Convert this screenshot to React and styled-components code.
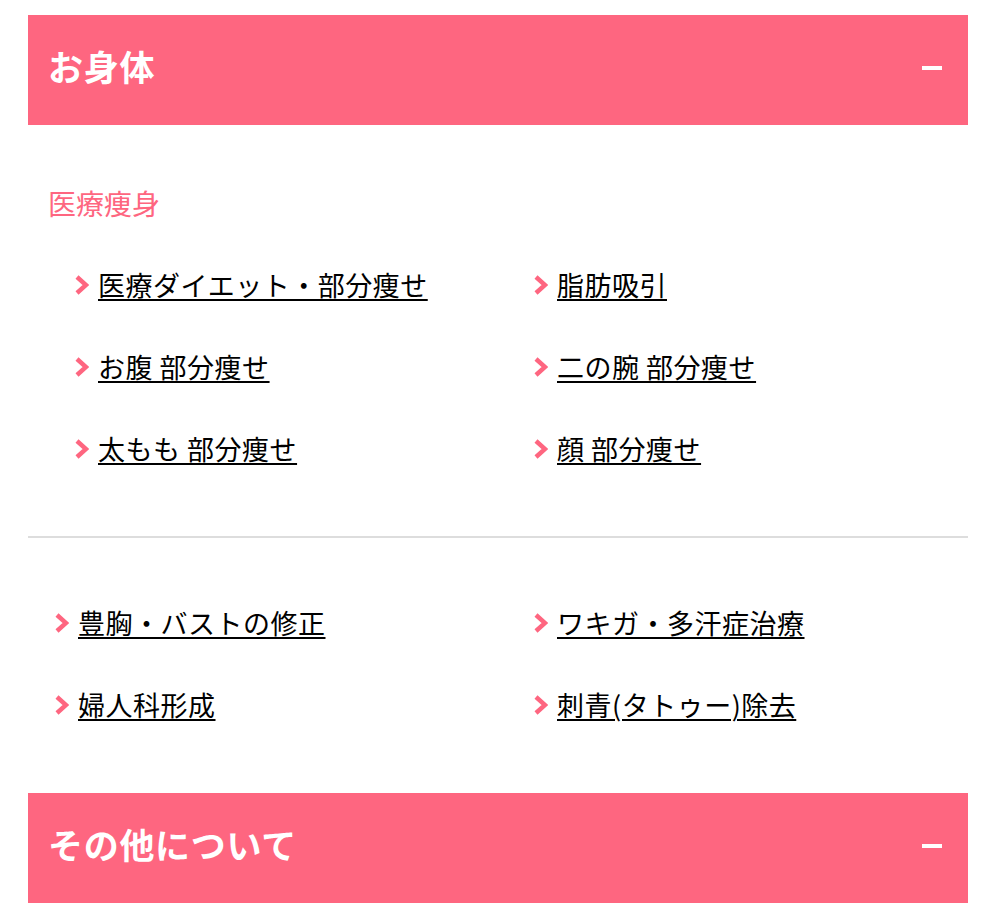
import React, { useState } from 'react';
import styled, { createGlobalStyle } from 'styled-components';

const GlobalStyle = createGlobalStyle`
  * {
    box-sizing: border-box;
  }

  body {
    margin: 0;
    background: #fff;
    font-family: 'Noto Sans CJK JP', 'Noto Sans', sans-serif;
    color: #000;
  }
`;

const PINK = '#fe6680';

const Page = styled.div`
  padding: 15px 28px;
`;

const AccordionHeader = styled.button`
  display: flex;
  align-items: center;
  justify-content: space-between;
  width: 100%;
  height: 110px;
  padding: 0 26px 4px 20px;
  border: none;
  background: ${PINK};
  color: #fff;
  font-family: inherit;
  cursor: pointer;
  text-align: left;
`;

const HeaderTitle = styled.span`
  margin-bottom: 5px;
  font-size: 35px;
  line-height: 50px;
  font-weight: 700;
  letter-spacing: 0.02em;
`;

const Minus = styled.span`
  display: block;
  width: 20px;
  height: 4px;
  background: #fff;
`;

const Group = styled.div`
  padding: ${props => props.$top}px 0 ${props => props.$bottom}px;
  border-bottom: ${props => (props.$divider ? '2px solid #dddddd' : 'none')};
`;

const GroupTitle = styled.h3`
  margin: 0 0 42px;
  padding-left: 20px;
  font-size: 28px;
  line-height: 40px;
  font-weight: 400;
  color: ${PINK};
`;

const LinkGrid = styled.ul`
  display: grid;
  grid-template-columns: ${props => 505 - props.$indent}px 1fr;
  row-gap: 42px;
  margin: 0;
  padding: 0 0 0 ${props => props.$indent}px;
  list-style: none;
`;

const LinkItem = styled.li`
  display: flex;
  align-items: center;
  gap: 9px;
  height: 40px;

  svg {
    flex-shrink: 0;
  }
`;

const LinkText = styled.a`
  font-size: 27px;
  line-height: 40px;
  letter-spacing: 0.5px;
  color: #000;
  text-decoration: underline;
  text-decoration-thickness: 2px;
  text-underline-offset: 3px;
  white-space: nowrap;
  cursor: pointer;
`;

const Chevron = () => (
  <svg width="15" height="22" viewBox="0 0 15 22">
    <polyline
      points="3,3 12,11 3,19"
      fill="none"
      stroke={PINK}
      strokeWidth="4.5"
    />
  </svg>
);

const slimming = [
  '医療ダイエット・部分痩せ',
  '脂肪吸引',
  'お腹 部分痩せ',
  '二の腕 部分痩せ',
  '太もも 部分痩せ',
  '顔 部分痩せ'
];

const others = ['豊胸・バストの修正', 'ワキガ・多汗症治療', '婦人科形成', '刺青(タトゥー)除去'];

const Links = ({ items, indent }) => (
  <LinkGrid $indent={indent}>
    {items.map(item => (
      <LinkItem key={item}>
        <Chevron />
        <LinkText>{item}</LinkText>
      </LinkItem>
    ))}
  </LinkGrid>
);

const App = () => {
  const [open, setOpen] = useState(true);

  return (
    <>
      <GlobalStyle />
      <Page>
        <AccordionHeader onClick={() => setOpen(!open)}>
          <HeaderTitle>お身体</HeaderTitle>
          <Minus />
        </AccordionHeader>
        {open && (
          <>
            <Group $top={58} $bottom={67} $divider>
              <GroupTitle>医療痩身</GroupTitle>
              <Links items={slimming} indent={46} />
            </Group>
            <Group $top={65} $bottom={68}>
              <Links items={others} indent={26} />
            </Group>
          </>
        )}
        <AccordionHeader>
          <HeaderTitle>その他について</HeaderTitle>
          <Minus />
        </AccordionHeader>
      </Page>
    </>
  );
};

export default App;
